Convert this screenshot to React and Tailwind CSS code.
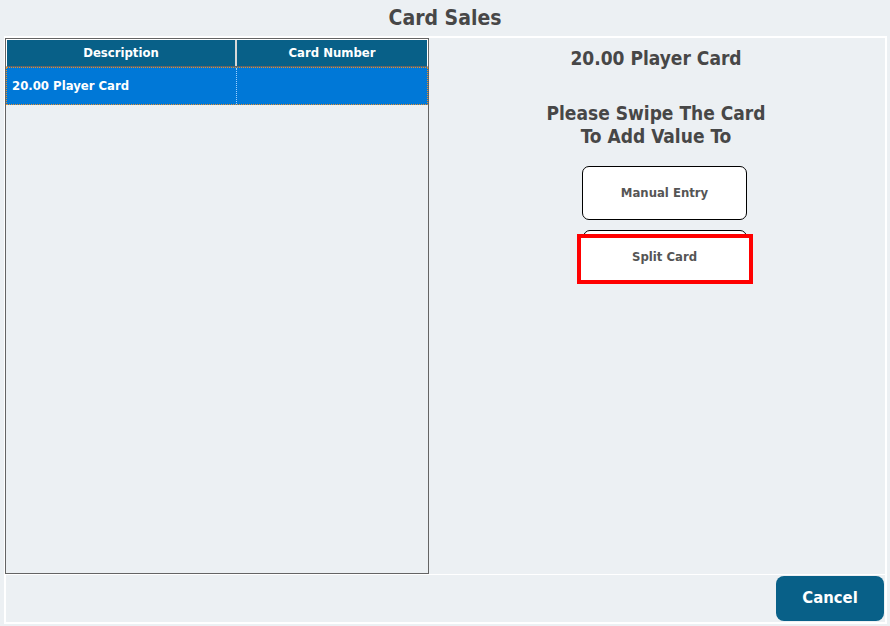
import React from "react";

export default function App() {
  const font = { fontFamily: '"DejaVu Sans Condensed", "DejaVu Sans", Tahoma, sans-serif' };
  return (
    <div className="w-[890px] h-[626px] bg-[#ecf0f3] flex flex-col" style={font}>
      <div className="h-[36px] pt-[2px] flex items-center justify-center text-[21px] font-bold text-[#474747]">
        Card Sales
      </div>
      <div className="ml-[4px] mr-[3px] h-[538px] border-t-2 border-r-2 border-l border-white flex">
        <div className="w-[424px] h-full border border-[#646464] flex flex-col">
          <div className="h-[28px] flex bg-[#086088] text-white text-[13px] font-bold border border-white border-b-[#646464]">
            <div className="w-[230px] flex items-center justify-center border-r-2 border-[#d8d8d8]">Description</div>
            <div className="flex-1 flex items-center justify-center">Card Number</div>
          </div>
          <div className="h-[38px] flex bg-[#0078d7] text-white text-[13px] font-bold border border-dotted border-[#e8902c]">
            <div className="w-[230px] flex items-center pl-[5px] border-r border-dotted border-[#9fd0ff]">20.00 Player Card</div>
            <div className="flex-1"></div>
          </div>
        </div>
        <div className="flex-1 flex flex-col items-center text-[#474747]">
          <div className="mt-[8px] text-[19px] font-bold leading-[24px] -translate-x-[1px]">20.00 Player Card</div>
          <div className="mt-[32px] text-[19px] font-bold leading-[23px] text-center -translate-x-[1px]">
            Please Swipe The Card
            <br />
            To Add Value To
          </div>
          <div className="mt-[18px] ml-[15px] w-[165px] h-[54px] pb-[1px] bg-white border border-black rounded-[7px] flex items-center justify-center text-[13px] font-bold text-[#555]">
            Manual Entry
          </div>
          <div className="relative mt-[10px] ml-[15px] w-[164px] h-[52px]">
            <div className="w-full h-full bg-white border border-black rounded-[7px]"></div>
            <div className="absolute left-[-6px] top-[4px] w-[176px] h-[50px] pb-[5px] border-4 border-[#ff0000] bg-white flex items-center justify-center text-[13px] font-bold text-[#555]">
              Split Card
            </div>
          </div>
        </div>
      </div>
      <div className="ml-[4px] mr-[3px] h-[50px] border-t border-b-2 border-l-2 border-r-2 border-white flex justify-end items-center">
        <div className="mr-[1px] mb-[1px] w-[108px] h-[45px] bg-[#086088] rounded-[8px] flex items-center justify-center text-white text-[16.5px] font-bold">
          Cancel
        </div>
      </div>
    </div>
  );
}
